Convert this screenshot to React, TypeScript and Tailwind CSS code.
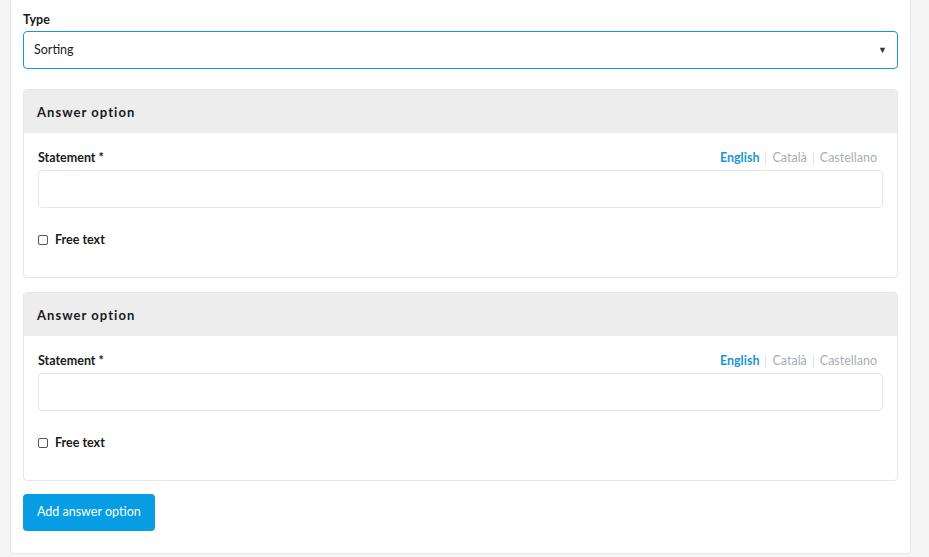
import React from "react";

function AnswerOption() {
  return (
    <div className="rounded border border-[#e6e6e6] bg-white">
      <div className="flex h-[43px] items-center rounded-t bg-[#ededed] px-[13px]">
        <span className="text-[13px] leading-[16px] font-bold tracking-[0.08em] text-[#1a1a1a]">Answer option</span>
      </div>
      <div className="px-[14px] pt-[17px] pb-[29px]">
        <div className="flex h-[16px] items-center justify-between pr-[6px]">
          <label className="text-[12.5px] leading-[16px] font-bold text-[#1a1a1a]">Statement *</label>
          <div className="flex items-center text-[12.5px] leading-[16px]">
            <span className="font-bold text-[#1997d5]">English</span>
            <span className="mx-[6px] h-[13px] border-l border-[#e3e3e3]" />
            <span className="text-[#a8aeb8]">Català</span>
            <span className="mx-[6px] h-[13px] border-l border-[#e3e3e3]" />
            <span className="text-[#a8aeb8]">Castellano</span>
          </div>
        </div>
        <input className="mt-[4px] block h-[38px] w-full rounded border border-[#e6e6e6] bg-white" />
        <div className="mt-[24px] flex h-[16px] items-center gap-[7px]">
          <span className="h-[10px] w-[10px] rounded-[2px] border border-[#555]" />
          <span className="text-[12.5px] leading-[16px] font-bold text-[#1a1a1a]">Free text</span>
        </div>
      </div>
    </div>
  );
}

export default function App() {
  return (
    <div className="h-[557px] bg-[#f5f5f5] pl-[10px] pr-[18px]" style={{ fontFamily: "Lato, 'Noto Sans', sans-serif" }}>
      <div className="h-[554px] rounded-b border border-t-0 border-[#e6e6e6] bg-white px-[12px] pt-[12px]">
        <label className="block text-[12.5px] leading-[16px] font-bold text-[#1a1a1a]">Type</label>
        <div className="mt-[3px] flex h-[38px] items-center justify-between rounded border border-[#1997d5] px-[10px]">
          <span className="text-[12.5px] text-[#1a1a1a]">Sorting</span>
          <span className="text-[9px] text-[#333]">▼</span>
        </div>
        <div className="mt-[20px] flex flex-col gap-[14px]">
          <AnswerOption />
          <AnswerOption />
        </div>
        <button className="mt-[13px] h-[37px] rounded bg-[#069de4] px-[14px] text-[12.5px] text-white">
          Add answer option
        </button>
      </div>
    </div>
  );
}
